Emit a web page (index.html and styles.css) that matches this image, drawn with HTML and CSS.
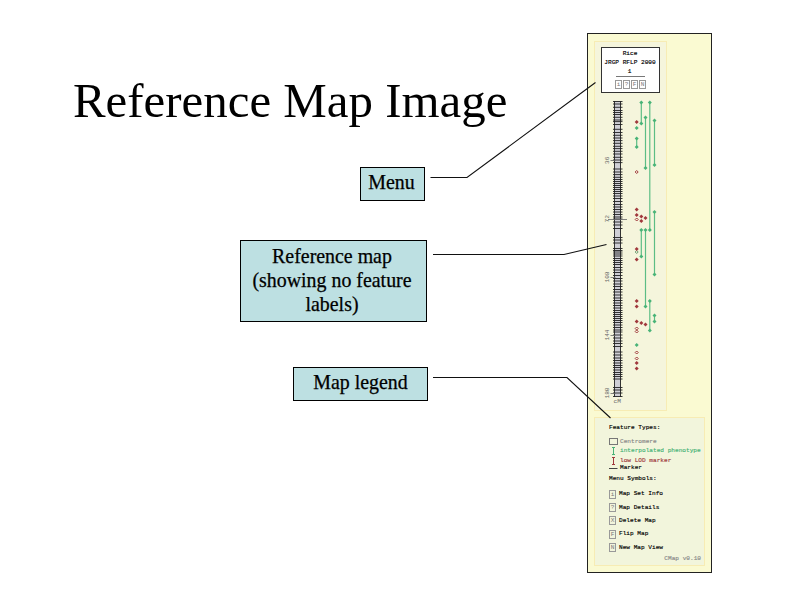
FILE: index.html
```html
<!DOCTYPE html>
<html lang="en">
<head>
<meta charset="utf-8">
<title>Reference Map Image</title>
<link rel="stylesheet" href="styles.css">
</head>
<body>
<main class="slide">
  <section class="notes">
    <h1>Reference Map Image</h1>
    <div class="label label-menu">Menu</div>
    <div class="label label-map">Reference map<br>(showing no feature<br>labels)</div>
    <div class="label label-legend">Map legend</div>
  </section>
  <aside class="cmap">
    <section class="map-area">
      <header class="map-menu">
        <p>Rice</p>
        <p>JRGP RFLP 2000</p>
        <p class="map-number">1</p>
        <nav><b>i</b><b>?</b><b>F</b><b>N</b></nav>
      </header>
      <svg class="map" width="71" height="316" viewBox="595 93 71 316">
        <defs>
          <path id="d" d="M0-2 2 0 0 2-2 0Z"/>
          <path id="o" d="M0-1.5 1.5 0 0 1.5-1.5 0Z" fill="none" stroke-width="1"/>
        </defs>
        <rect x="614" y="101" width="7" height="296" fill="#cfcfd6"/>
        <path class="rails" d="M614.5 101V397M620.5 101V397"/>
        <path class="ticks" d="M613 101.5h9.500M613 104h9.500M613 107.300h9.500M613 110.500h9.500M613 112.500h9.500M613 114.500h9.500M613 117.300h9.500M613 120h9.500M613 121.600h9.500M613 124.500h9.500M613 129.300h9.500M613 132.500h9.500M613 135.300h9.500M613 138h9.500M613 140.600h9.500M613 143.300h9.500M613 146.300h9.500M613 148.600h9.500M613 151.300h9.500M613 154h9.500M613 157.300h9.500M613 160h9.500M613 162.600h9.500M613 169h9.500M613 172h9.500M613 174.600h9.500M613 177.300h9.500M613 179.500h9.500M613 181.500h9.500M613 183.500h9.500M613 185.500h9.500M613 187.500h9.500M613 189.500h9.500M613 191.500h9.500M613 193.500h9.500M613 196h9.500M613 198.500h9.500M613 201.500h9.500M613 204.500h9.500M613 207h9.500M613 209.500h9.500M613 212h9.500M613 214.500h9.500M613 217h9.500M613 219h9.500M613 222h9.500M613 225h9.500M613 228.500h9.500M613 237.500h9.500M613 240h9.500M613 243h9.500M613 248.500h9.500M613 250.500h9.500M613 252h9.500M613 254h9.500M613 256h9.500M613 258.500h9.500M613 260.500h9.500M613 262.500h9.500M613 264.500h9.500M613 267.500h9.500M613 270h9.500M613 272.500h9.500M613 275.500h9.500M613 278.500h9.500M613 281h9.500M613 284h9.500M613 286.500h9.500M613 289.500h9.500M613 292h9.500M613 295h9.500M613 298h9.500M613 300.500h9.500M613 303h9.500M613 305.500h9.500M613 308h9.500M613 310.500h9.500M613 312.500h9.500M613 314.500h9.500M613 316.500h9.500M613 318.500h9.500M613 320.500h9.500M613 322.500h9.500M613 325h9.500M613 327.500h9.500M613 330h9.500M613 332h9.500M613 335h9.500M613 338h9.500M613 341h9.500M613 343.500h9.500M613 346.500h9.500M613 352h9.500M613 355h9.500M613 358h9.500M613 360.500h9.500M613 363h9.500M613 365.500h9.500M613 367.500h9.500M613 370h9.500M613 372.500h9.500M613 374.500h9.500M613 376.500h9.500M613 379h9.500M613 387.500h9.500M613 390h9.500M613 393h9.500M613 396.500h9.500"/>
        <path class="scale" d="M610.500 160.500h5M608 219.500h19M610.500 277.500h5M610.500 335.500h5M610.500 393.500h5"/>
        <g class="units">
          <text transform="translate(608.500 164)rotate(-90)">36</text>
          <text transform="translate(608.500 222.500)rotate(-90)">72</text>
          <text transform="translate(608.500 282.500)rotate(-90)">108</text>
          <text transform="translate(608.500 340.500)rotate(-90)">144</text>
          <text transform="translate(608.500 398.500)rotate(-90)">180</text>
          <text x="613.500" y="403">cM</text>
        </g>
        <path class="spans" d="M641.300 102.500V123.500M645.500 117.500V168M649.800 102.500V230M654.500 120.500V165M636.700 138.500V147M641.300 230V256.500M645.500 230V306.500M654.500 212V274.500M649.800 301V330.500M654.500 315.500V321.500"/>
        <g fill="#48b377">
          <use href="#d" x="641.300" y="102.500"/><use href="#d" x="641.300" y="123.500"/>
          <use href="#d" x="645.500" y="117.500"/><use href="#d" x="645.500" y="168"/>
          <use href="#d" x="649.800" y="102.500"/><use href="#d" x="649.800" y="230"/>
          <use href="#d" x="654.500" y="120.500"/><use href="#d" x="654.500" y="165"/>
          <use href="#d" x="636.700" y="128"/><use href="#d" x="636.700" y="138.500"/><use href="#d" x="636.700" y="147"/>
          <use href="#d" x="641.300" y="230"/><use href="#d" x="641.300" y="256.500"/>
          <use href="#d" x="645.500" y="230"/><use href="#d" x="645.500" y="306.500"/>
          <use href="#d" x="654.500" y="212"/><use href="#d" x="654.500" y="274.500"/>
          <use href="#d" x="649.800" y="301"/><use href="#d" x="649.800" y="330.500"/>
          <use href="#d" x="654.500" y="315.500"/><use href="#d" x="654.500" y="321.500"/>
          <use href="#d" x="636.700" y="345"/>
        </g>
        <use href="#o" x="636.700" y="252" stroke="#6a9a70"/>
        <g fill="#a0383c">
          <use href="#d" x="636.700" y="122"/><use href="#d" x="636.700" y="209.500"/><use href="#d" x="636.700" y="215"/>
          <use href="#d" x="641.300" y="216.500"/><use href="#d" x="641.300" y="221"/><use href="#d" x="645.500" y="218"/>
          <use href="#d" x="636.700" y="249"/><use href="#d" x="636.700" y="259.500"/>
          <use href="#d" x="636.700" y="301"/><use href="#d" x="636.700" y="306.500"/><use href="#d" x="636.700" y="321.500"/>
          <use href="#d" x="641.300" y="323"/><use href="#d" x="645.500" y="324.500"/>
          <use href="#d" x="636.700" y="363"/><use href="#d" x="636.700" y="368.500"/>
        </g>
        <g stroke="#a0383c">
          <use href="#o" x="636.700" y="172"/><use href="#o" x="636.700" y="219.500"/>
          <use href="#o" x="636.700" y="328.500"/><use href="#o" x="636.700" y="331.500"/>
          <use href="#o" x="636.700" y="352.500"/><use href="#o" x="636.700" y="358.500"/>
        </g>
      </svg>
    </section>
    <section class="legend">
      <h2>Feature Types:</h2>
      <ul class="features">
        <li class="gray"><svg width="10" height="8"><rect x=".5" y=".5" width="8" height="6" fill="none" stroke="#777"/></svg><span>Centromere</span></li>
        <li class="green"><svg width="10" height="8"><path d="M4.500 0V8M3 .5h3M3 7.500h3" fill="none" stroke="#48b377"/></svg><span>interpolated phenotype</span></li>
        <li class="red"><svg width="10" height="8"><path d="M4.500 0V8M3 .5h3M3 7.500h3" fill="none" stroke="#a0383c"/></svg><span>low LOD marker</span></li>
        <li class="marker"><svg width="10" height="8"><path d="M0 4.500h8.500" stroke="#444"/></svg><span>Marker</span></li>
      </ul>
      <h2>Menu Symbols:</h2>
      <ul class="symbols">
        <li><b>i</b>Map Set Info</li>
        <li><b>?</b>Map Details</li>
        <li><b>X</b>Delete Map</li>
        <li><b>F</b>Flip Map</li>
        <li><b>N</b>New Map View</li>
      </ul>
      <footer>CMap v0.10</footer>
    </section>
  </aside>
  <svg class="connectors" width="800" height="600">
    <path d="M430.500 177.500H467L595.500 82.500M433 254.500H564L606.500 244.500M433 377.500H567L610.500 418"/>
  </svg>
</main>
</body>
</html>
```
FILE: styles.css
```css
* { box-sizing: border-box; }
body { margin: 0; background: #fff; }
h1, h2, p, ul { margin: 0; padding: 0; font-weight: normal; }
ul { list-style: none; }

.slide {
  position: relative;
  display: flex;
  width: 800px;
  height: 600px;
  overflow: hidden;
  color: #000;
  font-family: "Liberation Serif", serif;
}
.notes {
  width: 587px;
  display: flex;
  flex-direction: column;
  align-items: flex-start;
}
h1 {
  margin: 73px 0 0 73px;
  font-size: 48.9px;
  line-height: 56px;
  white-space: nowrap;
}
.label {
  border: 1px solid #000;
  background: #bde0e2;
  font-size: 19.9px;
  line-height: 24px;
  text-align: center;
  padding-top: 2px;
  white-space: nowrap;
  -webkit-text-stroke: .25px #000;
}
.label-menu { width: 65px; height: 34px; margin: 38px 0 0 360px; padding-right: 2px; }
.label-map { width: 187px; height: 82px; margin: 39px 0 0 240px; padding-right: 3px; padding-top: 3px; }
.label-legend { width: 135px; height: 34px; margin: 45px 0 0 293px; }

.cmap {
  width: 125px;
  height: 540px;
  margin-top: 33px;
  padding: 7px 6px;
  border: 1px solid #222;
  background: #fafad2;
  font: 6.12px/8px "Liberation Mono", monospace;
  -webkit-text-stroke: .15px currentColor;
}
.map-area {
  width: 73px;
  height: 370px;
  border: 1px solid #f7ecb4;
  background: #f5f5dc;
}
.map-menu {
  width: 59px;
  height: 46px;
  margin: 5px 0 0 6px;
  border: 1px solid #333;
  background: #fff;
  text-align: center;
  white-space: nowrap;
}
.map-menu p { height: 9px; line-height: 11px; margin-left: -1px; }
.map-menu .map-number { height: 11px; width: 29px; margin-left: 14px; padding-right: 2px; border-bottom: 1px solid #777; line-height: 11px; }
nav { display: flex; justify-content: center; gap: 1px; margin-top: 3px; }
b {
  width: 7px;
  height: 9px;
  border: 1px solid #999;
  color: #777;
  font-weight: normal;
  line-height: 7px;
  text-align: center;
  -webkit-text-stroke: 0;
}
.map { display: block; }
.rails { stroke: #333; fill: none; }
.ticks { stroke: #222; stroke-width: .9; }
.scale { stroke: #666; stroke-width: .8; }
.spans { stroke: #5cbd85; stroke-width: 1.2; }
.units { fill: #666; font-size: 6.15px; -webkit-text-stroke: 0; }

.legend {
  width: 111px;
  height: 149px;
  margin-top: 6px;
  padding: 6px 2px 0 14px;
  border: 1px solid #f7ecb4;
  background: #f2f5dc;
  white-space: nowrap;
}
h2 { font-size: inherit; line-height: 8px; }
.features { margin: 5px 0 5px; }
.features li { display: flex; gap: 1px; height: 9.500px; align-items: center; }
.features .marker { height: 4px; }
.gray, footer { color: #888; }
.green { color: #48b377; }
.red { color: #a0383c; }
.symbols { margin-top: 5px; }
.symbols li { display: flex; align-items: center; gap: 3px; height: 13.400px; }
footer { text-align: right; margin: 1px 1px 0 0; line-height: 8px; }

.connectors { position: absolute; inset: 0; pointer-events: none; }
.connectors path { fill: none; stroke: #111; stroke-width: 1.1; }
```
